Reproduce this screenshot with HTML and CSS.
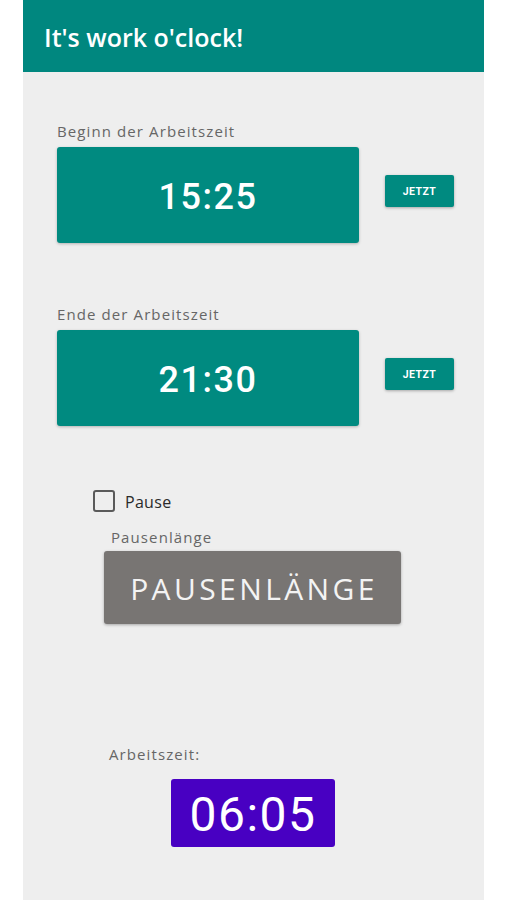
FILE: index.html
```html
<!DOCTYPE html>
<html>
<head>
<meta charset="utf-8">
<meta name="viewport" content="width=device-width, initial-scale=1">
<link rel="stylesheet" href="styles.css">
<title>It's work o'clock!</title>
</head>
<body>
<div class="screen">
  <div class="app-bar">It's work o'clock!</div>

  <div class="field field-start">
    <div class="field-label">Beginn der Arbeitszeit</div>
    <div class="field-row">
      <div class="time-box">15:25</div>
      <button class="now-btn">JETZT</button>
    </div>
  </div>

  <div class="field field-end">
    <div class="field-label">Ende der Arbeitszeit</div>
    <div class="field-row">
      <div class="time-box">21:30</div>
      <button class="now-btn">JETZT</button>
    </div>
  </div>

  <label class="pause-check">
    <span class="check-box"></span>
    <span class="check-text">Pause</span>
  </label>
  <div class="pause-label">Pausenlänge</div>
  <button class="pause-btn">PAUSENLÄNGE</button>

  <div class="result-label">Arbeitszeit:</div>
  <div class="result-box">06:05</div>
</div>
</body>
</html>
```

FILE: styles.css
```css
body
{
  margin: 0;
  background: #ffffff;
}
.screen
{
  margin-left: 23px;
  width: 461px;
  height: 900px;
  background: #eeeeee;
  font-family: "Open Sans", sans-serif;
  overflow: hidden;
}
.app-bar
{
  height: 72px;
  box-sizing: border-box;
  padding: 2px 0 0 21px;
  line-height: 70px;
  background: #00877f;
  color: #ffffff;
  font-size: 25px;
  font-weight: 600;
}
.field
{
  margin-left: 34px;
}
.field-start { margin-top: 49px; }
.field-end { margin-top: 61px; }
.field-label, .pause-label, .result-label
{
  font-size: 15px;
  line-height: 20px;
  letter-spacing: 1.1px;
  color: #666666;
}
.field-label
{
  margin-bottom: 6px;
}
.field-row
{
  display: flex;
  align-items: flex-start;
  gap: 26px;
}
.time-box
{
  width: 302px; height: 96px;
  display: flex;
  align-items: center;
  justify-content: center;
  background: #008a80;
  border-radius: 3px;
  box-shadow: 0 1px 3px rgba(0, 0, 0, 0.25);
  color: #ffffff;
  font-family: Roboto, sans-serif;
  font-size: 36px;
  font-weight: 500;
  letter-spacing: 1.5px;
  padding-top: 4px;
  box-sizing: border-box;
}
.now-btn
{
  margin-top: 28px;
  width: 69px; height: 32px;
  border: none;
  border-radius: 2px;
  background: #008a80;
  box-shadow: 0 1px 3px rgba(0, 0, 0, 0.3);
  color: #ffffff;
  font-family: Roboto, sans-serif;
  font-size: 10.5px;
  font-weight: 700;
  letter-spacing: 0.4px;
  padding: 0;
}
.pause-check
{
  display: flex;
  align-items: center;
  margin: 64px 0 0 70px;
  height: 22px;
}
.check-box
{
  width: 22px; height: 22px;
  box-sizing: border-box;
  border: 2px solid #5a5a5a;
  border-radius: 3px;
}
.check-text
{
  margin-left: 10px;
  padding-top: 2px;
  font-size: 16px;
  letter-spacing: 0.3px;
  color: #2a2a2a;
}
.pause-label
{
  margin: 15px 0 0 88px;
}
.pause-btn
{
  display: block;
  margin: 4px 0 0 81px;
  width: 297px; height: 73px;
  border: none;
  border-radius: 3px;
  background: #787573;
  box-shadow: 0 1px 3px rgba(0, 0, 0, 0.3);
  color: #f3f3f3;
  font-family: "Open Sans", sans-serif;
  font-size: 30px;
  letter-spacing: 3.4px;
  padding: 2px 0 0 3px;
}
.result-label
{
  margin: 120px 0 0 86px;
}
.result-box
{
  margin: 15px 0 0 148px;
  width: 164px; height: 68px;
  display: flex;
  align-items: center;
  justify-content: center;
  background: #4800c2;
  border-radius: 3px;
  color: #ffffff;
  font-family: Roboto, sans-serif;
  font-size: 48px;
  letter-spacing: 1.5px;
  padding-top: 3px;
  box-sizing: border-box;
}
```
